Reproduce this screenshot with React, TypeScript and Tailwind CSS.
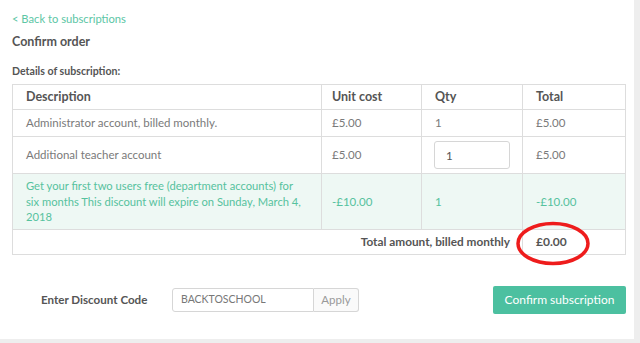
import React from "react";

const rows = [
  { desc: "Administrator account, billed monthly.", unit: "£5.00", qty: "1", total: "£5.00" },
];

export default function App() {
  return (
    <div className="w-[640px] h-[343px] bg-[#eeeeee] overflow-hidden" style={{ fontFamily: "Lato, 'Open Sans', sans-serif" }}>
      <div className="relative w-[634px] h-[339px] bg-white pl-3 pt-[11px]">
        <a className="block text-[11.2px] leading-[15px] text-[#5cc6a5]">&lt; Back to subscriptions</a>
        <h1 className="mt-[8px] text-[12.5px] leading-[16px] font-bold text-[#555]">Confirm order</h1>
        <h2 className="mt-[14px] text-[10.6px] leading-[14px] font-bold text-[#555]">Details of subscription:</h2>

        <table className="mt-[6px] w-[613px] border-collapse border border-[#dddddd] text-[11.5px] text-[#7a7a7a] table-fixed">
          <colgroup>
            <col className="w-[309px]" />
            <col className="w-[100px]" />
            <col className="w-[101px]" />
            <col className="w-[103px]" />
          </colgroup>
          <thead>
            <tr className="h-[25px] text-left text-[12.5px] text-[#555]">
              <th className="border border-[#dddddd] px-[13px] font-bold">Description</th>
              <th className="border border-[#dddddd] px-[10px] font-bold">Unit cost</th>
              <th className="border border-[#dddddd] px-[13px] font-bold">Qty</th>
              <th className="border border-[#dddddd] px-[13px] font-bold">Total</th>
            </tr>
          </thead>
          <tbody>
            {rows.map((r) => (
              <tr key={r.desc} className="h-[27px]">
                <td className="border border-[#dddddd] px-[13px]">{r.desc}</td>
                <td className="border border-[#dddddd] px-[10px]">{r.unit}</td>
                <td className="border border-[#dddddd] px-[13px]">{r.qty}</td>
                <td className="border border-[#dddddd] px-[13px]">{r.total}</td>
              </tr>
            ))}
            <tr className="h-[37px]">
              <td className="border border-[#dddddd] px-[13px]">Additional teacher account</td>
              <td className="border border-[#dddddd] px-[10px]">£5.00</td>
              <td className="border border-[#dddddd] px-[12px]">
                <input
                  defaultValue="1"
                  className="block w-[76px] h-[28px] rounded-[3px] border border-[#d6d6d6] px-[11px] text-[11.5px] text-[#555] outline-none"
                />
              </td>
              <td className="border border-[#dddddd] px-[13px]">£5.00</td>
            </tr>
            <tr className="h-[56px] bg-[#eef8f4] text-[#56c29e]">
              <td className="border border-[#dddddd] pl-[13px] pr-[4px] text-[11.2px] leading-[15.5px]">
                Get your first two users free (department accounts) for
                <br />
                six months This discount will expire on Sunday, March 4,
                <br />
                2018
              </td>
              <td className="border border-[#dddddd] px-[10px]">-£10.00</td>
              <td className="border border-[#dddddd] px-[13px]">1</td>
              <td className="border border-[#dddddd] px-[13px]">-£10.00</td>
            </tr>
            <tr className="h-[25px] font-bold text-[#555] text-[11.8px]">
              <td colSpan={3} className="border border-[#dddddd] px-[12px] text-right">Total amount, billed monthly</td>
              <td className="border border-[#dddddd] px-[13px] text-[12px]">£0.00</td>
            </tr>
          </tbody>
        </table>

        <div className="mt-[31px] flex items-center">
          <span className="ml-[29px] w-[131px] text-[11.6px] font-bold text-[#555]">Enter Discount Code</span>
          <div className="flex h-[24px]">
            <input
              defaultValue="BACKTOSCHOOL"
              className="w-[142px] rounded-l-[3px] border border-[#d6d6d6] px-[8px] text-[10.5px] text-[#777] outline-none"
            />
            <button className="w-[45px] rounded-r-[3px] border border-l-0 border-[#d6d6d6] bg-[#fafafa] text-[11.5px] text-[#999]">
              Apply
            </button>
          </div>
          <button className="ml-[134px] h-[28px] w-[133px] rounded-[2px] bg-[#4cc0a0] text-[12px] text-white">
            Confirm subscription
          </button>
        </div>

        <svg className="absolute left-[515px] top-[221px]" width="76" height="45" viewBox="0 0 76 45">
          <ellipse cx="38" cy="22.5" rx="35" ry="20" fill="none" stroke="#ee1c1c" strokeWidth="3.5" />
        </svg>
      </div>
    </div>
  );
}
